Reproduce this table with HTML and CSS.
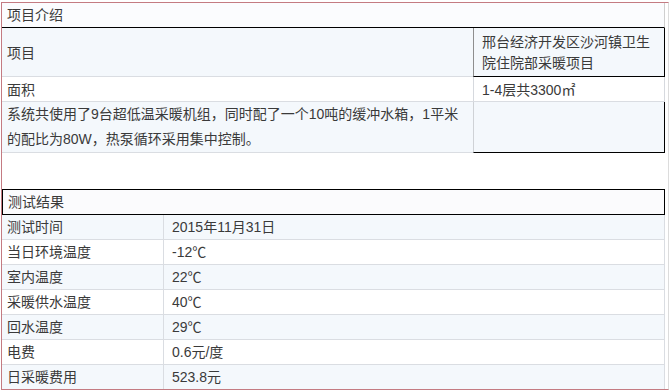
FILE: index.html
```html
<!DOCTYPE html>
<html lang="zh-CN">
<head>
<meta charset="utf-8">
<title>项目介绍</title>
<link rel="stylesheet" href="styles.css">
</head>
<body>
<div class="frame">
  <section class="intro">
    <div class="head">项目介绍</div>
    <div class="row tall">
      <div class="cell left blue mid">项目</div>
      <div class="cell right blue boxed wrap">邢台经济开发区沙河镇卫生院住院部采暖项目</div>
    </div>
    <div class="row">
      <div class="cell left mid">面积</div>
      <div class="cell right plain mid">1-4层共3300㎡</div>
    </div>
    <div class="row tall">
      <div class="cell left blue desc">系统共使用了9台超低温采暖机组，同时配了一个10吨的缓冲水箱，1平米的配比为80W，热泵循环采用集中控制。</div>
      <div class="cell right blue boxed2"></div>
    </div>
  </section>
  <section class="test">
    <div class="thead">测试结果</div>
    <div class="trow blue"><div class="k">测试时间</div><div class="v">2015年11月31日</div></div>
    <div class="trow"><div class="k">当日环境温度</div><div class="v">-12℃</div></div>
    <div class="trow blue"><div class="k">室内温度</div><div class="v">22℃</div></div>
    <div class="trow"><div class="k">采暖供水温度</div><div class="v">40℃</div></div>
    <div class="trow blue"><div class="k">回水温度</div><div class="v">29℃</div></div>
    <div class="trow"><div class="k">电费</div><div class="v">0.6元/度</div></div>
    <div class="trow blue last"><div class="k">日采暖费用</div><div class="v">523.8元</div></div>
  </section>
</div>
</body>
</html>
```
FILE: styles.css
```css
* { box-sizing: border-box; }
html, body { margin: 0; padding: 0; background: #fff; }
body {
  font-family: "Liberation Sans", "Noto Sans CJK SC", sans-serif;
  font-size: 14px;
  color: #3a3a3a;
}
.frame {
  margin: 2px 0 0 1px;
  width: 668px;
  height: 388px;
  border: 1px solid #c47b82;
  border-right-color: #dcdcdc;
}
.intro, .test { width: 663px; }
.head {
  height: 25px;
  line-height: 24px;
  padding-left: 5px;
  background: #fbfcfe;
  border-bottom: 1px solid #000;
  border-right: 1px solid #cfcfcf;
}
.row {
  display: grid;
  grid-template-columns: 471px 1fr;
  height: 25px;
}
.row.tall { height: 49px; }
.cell {
  border-bottom: 1px solid #dadde2;
  background: #fff;
}
.cell.blue { background: #f4f8fc; }
.cell.left { padding-left: 5px; }
.cell.mid { display: flex; align-items: center; }
.cell.right { padding: 0 8px; border-left: 1px solid #d6d9de; border-right: 1px solid #d6d9de; }
.cell.right.boxed {
  border-left-color: #8e8e8e;
  border-right-color: #000;
  border-bottom-color: #000;
}
.cell.right.wrap { padding-top: 4px; line-height: 21px; }
.cell.right.boxed2 {
  border-left-color: #cfd2d6;
  border-right-color: #000;
  border-bottom-color: #000;
}
.cell.desc { line-height: 25px; padding-right: 5px; }
.test { margin-top: 38px; }
.thead {
  height: 26px;
  line-height: 24px;
  padding-left: 5px;
  border: 1px solid #000;
  background: #fbfbfd;
}
.trow {
  display: grid;
  grid-template-columns: 162px 1fr;
  height: 25px;
  line-height: 24px;
  border-bottom: 1px solid #dadde2;
  background: #fff;
}
.trow.blue { background: #f4f8fc; }
.trow.last { border-bottom: none; height: 24px; }
.trow .k { padding-left: 5px; border-right: 1px solid #dadde2; }
.trow .v { padding-left: 8px; border-right: 1px solid #dadde2; }
```
